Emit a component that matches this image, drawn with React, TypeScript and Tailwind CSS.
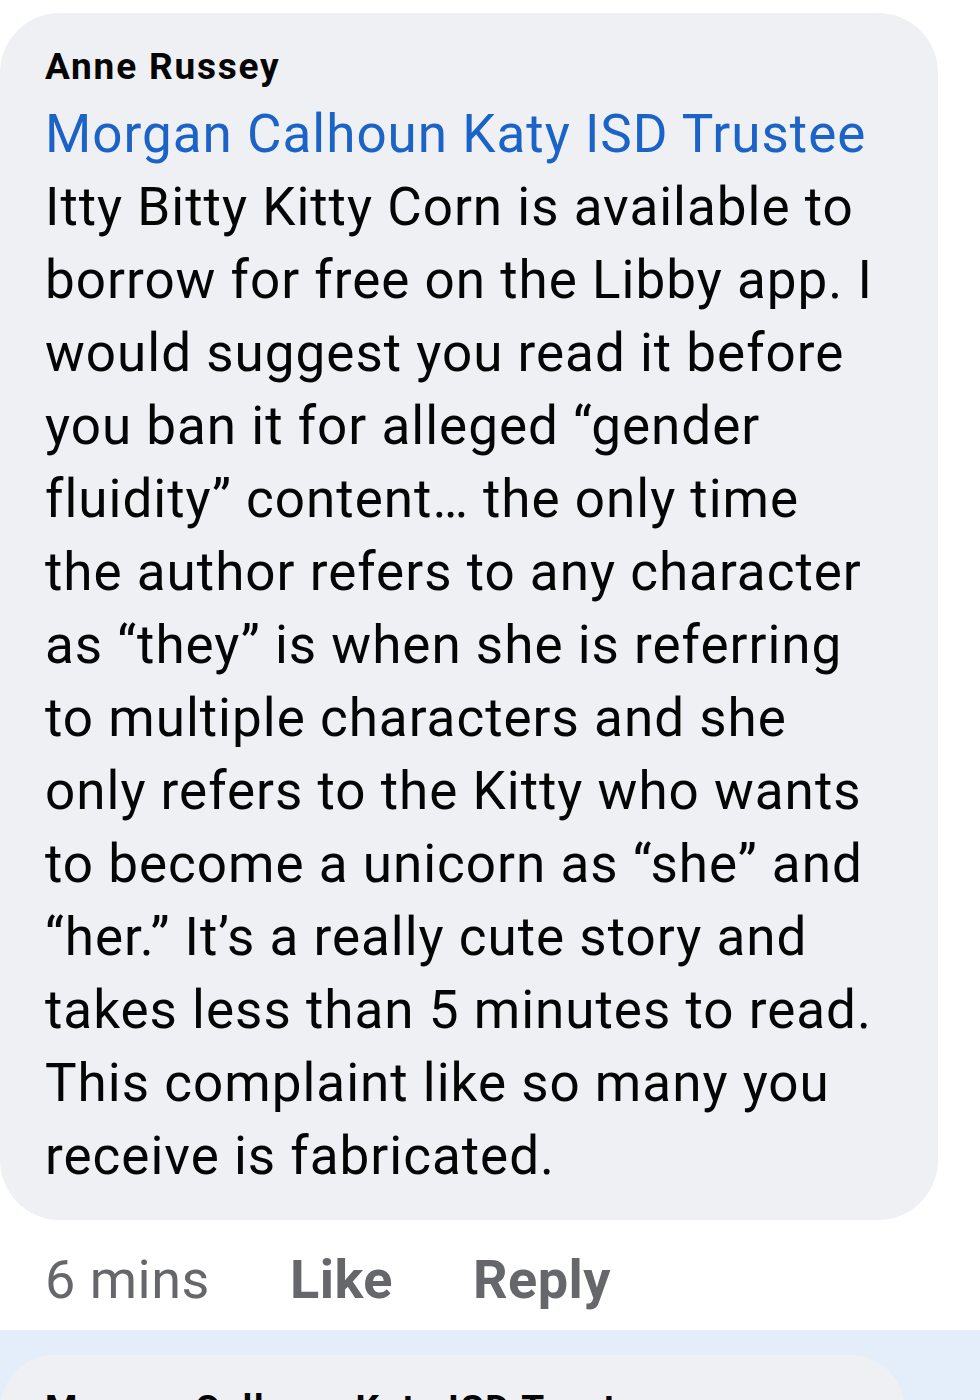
import React from "react";

const lines = [
  "Itty Bitty Kitty Corn is available to",
  "borrow for free on the Libby app. I",
  "would suggest you read it before",
  "you ban it for alleged \u201cgender",
  "fluidity\u201d content\u2026 the only time",
  "the author refers to any character",
  "as \u201cthey\u201d is when she is referring",
  "to multiple characters and she",
  "only refers to the Kitty who wants",
  "to become a unicorn as \u201cshe\u201d and",
  "\u201cher.\u201d It\u2019s a really cute story and",
  "takes less than 5 minutes to read.",
  "This complaint like so many you",
  "receive is fabricated.",
];

const font = { fontFamily: "Roboto, 'Noto Sans', Arial, sans-serif" };

export default function App() {
  return (
    <div className="w-[980px] h-[1400px] overflow-hidden bg-white" style={font}>
      {/* comment bubble */}
      <div className="pt-[13px]">
        <div className="w-[938px] rounded-[60px] bg-[#eff0f4] pl-[45px] pt-[34px] pb-[27px]">
          <div className="h-[40px] mb-[11px] text-[37px] leading-[40px] font-bold tracking-[1.8px] text-[#050505]">
            Anne Russey
          </div>
          <div className="text-[53px] leading-[73px] tracking-[1px] text-[#1b63c6]">Morgan Calhoun Katy ISD Trustee</div>
          <div className="text-[53px] leading-[73px] tracking-[1px] text-[#050505]">
            {lines.map((l, i) => (
              <div key={i} className="whitespace-nowrap">{l}</div>
            ))}
          </div>
        </div>
      </div>

      {/* actions */}
      <div className="flex items-center h-[110px] pt-[8px] pl-[45px] text-[54px] tracking-[0.5px] text-[#65676b]">
        <span className="mr-[80px]">6 mins</span>
        <span className="font-bold mr-[80px]">Like</span>
        <span className="font-bold">Reply</span>
      </div>

      {/* next comment, highlighted */}
      <div className="bg-[#e4eefb] pt-[25px] h-[200px]">
        <div className="w-[905px] rounded-[55px] bg-[#eff0f4] pl-[45px] pt-[34px] h-[200px]">
          <div className="h-[40px] text-[37px] leading-[40px] font-bold tracking-[1.8px] text-[#050505] whitespace-nowrap">
            Morgan Calhoun Katy ISD Trustee
          </div>
        </div>
      </div>
    </div>
  );
}
